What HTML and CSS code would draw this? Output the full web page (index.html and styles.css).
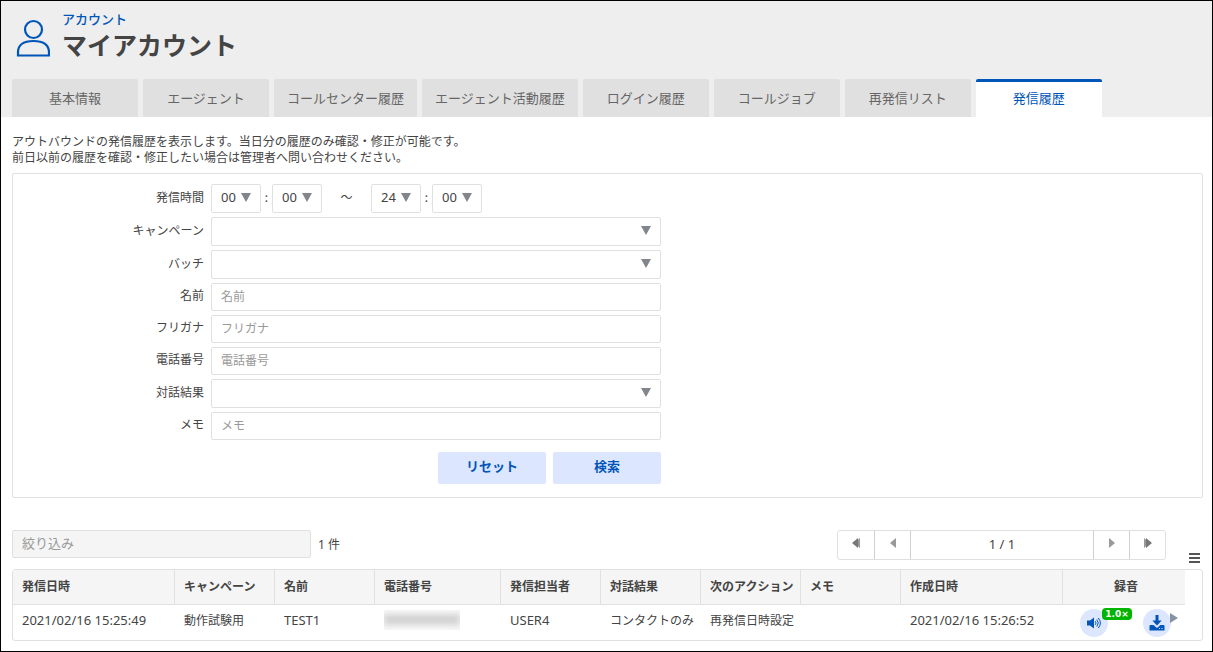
FILE: index.html
```html
<!DOCTYPE html>
<html lang="ja">
<head>
    <meta charset="UTF-8">
    <meta name="viewport" content="width=device-width, initial-scale=1.0">
    <title>マイアカウント</title>
    <link rel="stylesheet" href="styles.css">
</head>
<body>
  <!-- Header -->
  <header class="header">
    <div class="heading">
      <svg class="user-icon" viewBox="0 0 34 38" fill="none" stroke="#0055b8" stroke-width="2.200">
        <circle cx="17.500" cy="10.500" r="8.500"/>
        <path d="M2 36.500v-3C2 26 7.500 22 17.500 22S33 26 33 33.500v3z"/>
      </svg>
      <div>
        <p class="category">アカウント</p>
        <h1>マイアカウント</h1>
      </div>
    </div>
    <nav class="tabs">
      <a href="#" class="tab">基本情報</a>
      <a href="#" class="tab">エージェント</a>
      <a href="#" class="tab">コールセンター履歴</a>
      <a href="#" class="tab">エージェント活動履歴</a>
      <a href="#" class="tab">ログイン履歴</a>
      <a href="#" class="tab">コールジョブ</a>
      <a href="#" class="tab">再発信リスト</a>
      <a href="#" class="tab active">発信履歴</a>
    </nav>
  </header>

  <main class="content">
    <p class="description">アウトバウンドの発信履歴を表示します。当日分の履歴のみ確認・修正が可能です。<br>前日以前の履歴を確認・修正したい場合は管理者へ問い合わせください。</p>

    <!-- Search form -->
    <form class="search">
      <div class="row">
        <label for="from-hour">発信時間</label>
        <div class="times">
          <select id="from-hour"><option>00</option></select>
          <span class="colon">:</span>
          <select aria-label="開始 分"><option>00</option></select>
          <span class="tilde">～</span>
          <select aria-label="終了 時"><option>24</option></select>
          <span class="colon">:</span>
          <select aria-label="終了 分"><option>00</option></select>
        </div>
      </div>
      <div class="row">
        <label for="campaign">キャンペーン</label>
        <select id="campaign"><option></option></select>
      </div>
      <div class="row">
        <label for="batch">バッチ</label>
        <select id="batch"><option></option></select>
      </div>
      <div class="row">
        <label for="name">名前</label>
        <input type="text" id="name" placeholder="名前">
      </div>
      <div class="row">
        <label for="kana">フリガナ</label>
        <input type="text" id="kana" placeholder="フリガナ">
      </div>
      <div class="row">
        <label for="phone">電話番号</label>
        <input type="text" id="phone" placeholder="電話番号">
      </div>
      <div class="row">
        <label for="result">対話結果</label>
        <select id="result"><option></option></select>
      </div>
      <div class="row">
        <label for="memo">メモ</label>
        <input type="text" id="memo" placeholder="メモ">
      </div>
      <div class="buttons">
        <button type="reset">リセット</button>
        <button type="button">検索</button>
      </div>
    </form>

    <!-- Filter and paging -->
    <div class="toolbar">
      <input type="text" class="filter" placeholder="絞り込み" aria-label="絞り込み">
      <span class="count">1 件</span>
      <div class="pager">
        <button type="button" aria-label="最初へ"><svg width="8" height="10" viewBox="0 0 8 10"><path fill="#999" d="M8 0v10L2 5z"/><path fill="#777" d="M6 0v10L0 5z"/></svg></button>
        <button type="button" aria-label="前へ"><svg width="6" height="10" viewBox="0 0 6 10"><path fill="#999" d="M6 0v10L0 5z"/></svg></button>
        <span class="page">1 / 1</span>
        <button type="button" aria-label="次へ"><svg width="6" height="10" viewBox="0 0 6 10"><path fill="#999" d="M0 0v10l6-5z"/></svg></button>
        <button type="button" aria-label="最後へ"><svg width="8" height="10" viewBox="0 0 8 10"><path fill="#999" d="M0 0v10l6-5z"/><path fill="#777" d="M2 0v10l6-5z"/></svg></button>
      </div>
      <button type="button" class="menu" aria-label="メニュー"><svg width="11" height="10" viewBox="0 0 11 10"><path d="M0 1h11M0 5h11M0 9h11" stroke="#555" stroke-width="2"/></svg></button>
    </div>

    <!-- Result list -->
    <div class="list">
      <table>
        <colgroup>
          <col class="col-date"><col class="col-text"><col class="col-text"><col class="col-phone"><col class="col-text"><col class="col-text"><col class="col-text"><col class="col-text"><col class="col-date"><col>
        </colgroup>
        <thead>
          <tr>
            <th>発信日時</th>
            <th>キャンペーン</th>
            <th>名前</th>
            <th>電話番号</th>
            <th>発信担当者</th>
            <th>対話結果</th>
            <th>次のアクション</th>
            <th>メモ</th>
            <th>作成日時</th>
            <th class="center">録音</th>
          </tr>
        </thead>
        <tbody>
          <tr>
            <td class="latin">2021/02/16 15:25:49</td>
            <td>動作試験用</td>
            <td class="latin">TEST1</td>
            <td><span class="masked"></span></td>
            <td class="latin">USER4</td>
            <td>コンタクトのみ</td>
            <td>再発信日時設定</td>
            <td></td>
            <td class="latin">2021/02/16 15:26:52</td>
            <td class="record-cell">
              <div class="record">
                <button type="button" class="round" aria-label="再生">
                  <svg width="14" height="12" viewBox="0 0 14 12" fill="none" stroke="#0055b8">
                    <path fill="#0055b8" stroke="none" d="M0 3.500h3L7 .5v11L3 8.500H0z"/>
                    <path d="M8.300 4.200q1.500 1.800 0 3.600M9.800 2.500q3 3.500 0 7M11.300 1q4.200 5 0 10"/>
                  </svg>
                  <span class="speed">1.0×</span>
                </button>
                <button type="button" class="round" aria-label="ダウンロード">
                  <svg width="16" height="16" viewBox="0 0 16 16" fill="#0055b8">
                    <path d="M6.500 0h3v5.500h3.200L8 10.500 3.300 5.500h3.200z"/>
                    <path fill-rule="evenodd" d="M1 10h3.500L8 13l3.500-3H15l.5 1v4.500h-15V11zM10 13v1h1v-1zM12.500 13v1h1v-1z"/>
                  </svg>
                </button>
              </div>
              <svg class="next" width="8" height="10" viewBox="0 0 8 10"><path fill="#8593a3" d="M0 0v10l8-5z"/></svg>
            </td>
          </tr>
        </tbody>
      </table>
    </div>
  </main>
</body>
</html>
```
FILE: styles.css
```css
* { box-sizing: border-box; }
body { margin: 0; min-height: 100vh; border: 1px solid #000; background-color: #fff; color: #444; font-family: "Noto Sans CJK JP", sans-serif; font-size: 12px; line-height: 16px; }
h1, p { margin: 0; }
input, select, button { font: inherit; color: inherit; }
button { padding: 0; border: 0; background: none; cursor: pointer; }

/* header */
.header { padding: 9px 11px 0; background-color: #eee; }
.heading { display: flex; gap: 12px; height: 69px; padding-left: 4px; }
.user-icon { width: 34px; height: 38px; margin-top: 9px; }
.category { color: #0055b8; font-size: 13px; line-height: 18px; font-weight: 500; }
h1 { font-size: 25px; line-height: 32px; }
.tabs { display: flex; gap: 5px; }
.tab { min-width: 126px; height: 38px; padding: 0 13px; border-top: 3px solid #e0e0e0; border-radius: 2px 2px 0 0; background-color: #e0e0e0; color: #666; font-size: 13px; line-height: 31px; text-align: center; text-decoration: none; white-space: nowrap; }
.tab.active { border-top-color: #0055b8; background-color: #fff; color: #0055b8; }

.content { padding: 16px 9px 10px 11px; }
.description { margin-bottom: 8px; }

/* search form */
.search { display: flex; flex-direction: column; gap: 4px; padding: 10px 12px 13px; border: 1px solid #e0e0e0; border-radius: 2px; }
.row { display: grid; grid-template-columns: 179px 450px; gap: 7px; align-items: center; }
.row label { padding-bottom: 4px; text-align: right; }
.row input, .row select { width: 100%; height: 28px; padding: 0 9px 4px; border: 1px solid #e0e0e0; border-radius: 2px; background-color: #fff; }
.row select { height: 29px; appearance: none; background: url("data:image/svg+xml,%3Csvg xmlns='http://www.w3.org/2000/svg' width='10' height='9'%3E%3Cpath fill='%2380868b' d='M0 0h10L5 9z'/%3E%3C/svg%3E") no-repeat right 9px top 8px; }
.times { display: flex; align-items: center; }
.times select { width: 50px; font-family: "Noto Sans", sans-serif; font-size: 13px; }
.colon { width: 11px; padding-bottom: 3px; text-align: center; }
.tilde { width: 49px; padding-bottom: 3px; text-align: center; }
::placeholder { color: #999; opacity: 1; }
.buttons { display: flex; justify-content: flex-end; gap: 7px; width: 636px; margin-top: 8px; }
.buttons button { width: 108px; height: 32px; padding-bottom: 4px; border-radius: 2px; background-color: #dde6ff; color: #0055b8; font-size: 13px; font-weight: bold; }

/* filter and paging */
.toolbar { display: flex; align-items: flex-start; margin-top: 32px; }
.filter { width: 299px; height: 28px; padding: 0 9px 4px; border: 1px solid #e0e0e0; border-radius: 2px; background-color: #f5f5f5; font-size: 13px; }
.count { margin: 7px 0 0 7px; font-family: "Noto Sans", "Noto Sans CJK JP", sans-serif; }
.pager { display: flex; margin-left: auto; border: 1px solid #e0e0e0; border-radius: 3px; }
.pager button { display: flex; align-items: center; justify-content: center; width: 36px; height: 28px; padding-bottom: 4px; }
.pager > * + * { border-left: 1px solid #d0d0d0; }
.page { width: 183px; font-family: "Noto Sans", sans-serif; font-size: 13px; line-height: 26px; text-align: center; }
.menu { display: flex; margin: 23px 3px 0 23px; }

/* result list */
.list { margin-top: 6px; padding-right: 17px; border: 1px solid #e0e0e0; border-radius: 3px; }
table { width: 100%; border-collapse: separate; border-spacing: 0; table-layout: fixed; }
.col-date { width: 162px; }
.col-text { width: 100px; }
.col-phone { width: 126px; }
th, td { padding: 0 0 3px 9px; text-align: left; white-space: nowrap; }
th { height: 35px; border-right: 1px solid #e0e0e0; border-bottom: 1px solid #e0e0e0; background-color: #f5f5f5; }
th:last-child { border-right: 0; }
th.center { padding-left: 4px; text-align: center; }
td { height: 35px; padding-bottom: 5px; }
td.latin { font-family: "Noto Sans", sans-serif; font-size: 13px; }
.masked { display: block; width: 76px; height: 20px; background: linear-gradient(#f6f6f6, #d4d4d4 40%, #d8d8d8 60%, #f8f8f8); box-shadow: inset 0 0 6px #f4f4f4; }
td.record-cell { position: relative; padding: 0 14px 0 17px; }
.record { display: flex; justify-content: space-between; }
.round { position: relative; display: flex; align-items: center; justify-content: center; width: 28px; height: 28px; border-radius: 50%; background-color: #dde6ff; }
.speed { position: absolute; top: -1px; left: 22px; width: 30px; border-radius: 4px; background-color: #00b400; color: #fff; font-family: "DejaVu Sans", sans-serif; font-size: 9px; line-height: 12px; font-weight: bold; text-align: center; }
.next { position: absolute; top: 8px; right: 7px; }
```
